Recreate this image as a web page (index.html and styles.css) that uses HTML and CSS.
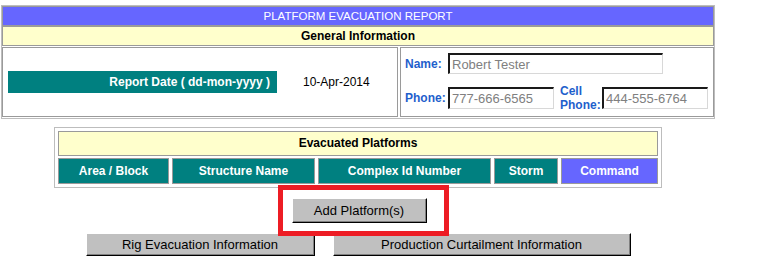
FILE: index.html
```html
<!DOCTYPE html>
<html lang="en">
<head>
    <meta charset="UTF-8">
    <title>Platform Evacuation Report</title>
    <link rel="stylesheet" href="styles.css">
</head>
<body>
    <div class="page">
        <div class="report">
            <div class="report-title">PLATFORM EVACUATION REPORT</div>
            <div class="section-title">General Information</div>
            <div class="info">
                <div class="info-date">
                    <div class="date-label">Report Date ( dd-mon-yyyy )</div>
                    <div class="date-value">10-Apr-2014</div>
                </div>
                <div class="info-contact">
                    <div class="contact-row">
                        <label class="field-label">Name:</label>
                        <input class="field field-name" type="text" value="Robert Tester" readonly>
                    </div>
                    <div class="contact-row">
                        <label class="field-label">Phone:</label>
                        <input class="field field-phone" type="text" value="777-666-6565" readonly>
                        <label class="field-label cell-label">Cell<br>Phone:</label>
                        <input class="field field-phone" type="text" value="444-555-6764" readonly>
                    </div>
                </div>
            </div>
        </div>

        <div class="platforms">
            <div class="section-title platforms-title">Evacuated Platforms</div>
            <div class="platforms-head">
                <div class="head-cell">Area / Block</div>
                <div class="head-cell">Structure Name</div>
                <div class="head-cell">Complex Id Number</div>
                <div class="head-cell">Storm</div>
                <div class="head-cell head-command">Command</div>
            </div>
        </div>

        <div class="actions">
            <button class="btn btn-add">Add Platform(s)</button>
        </div>
        <div class="actions actions-nav">
            <button class="btn btn-rig">Rig Evacuation Information</button>
            <button class="btn btn-prod">Production Curtailment Information</button>
        </div>

        <div class="highlight"></div>
    </div>
</body>
</html>
```

FILE: styles.css
```css
:root {
    --purple: #6666ff;
    --yellow: #ffffcc;
    --teal: #008080;
    --cell-border: #9a9a9a;
    --outer-border: #bdbdbd;
    --label-blue: #1f5fcc;
    --btn-grey: #c0c0c0;
}

* {
    box-sizing: border-box;
}

body {
    margin: 0;
    background: #fff;
    font-family: "Liberation Sans", Arial, sans-serif;
    font-size: 12px;
    color: #000;
}

.page {
    position: relative;
    width: 716px;
    padding-top: 5px;
}

/* report header block */
.report {
    margin-left: 1px;
    width: 714px;
    border: 1px solid var(--outer-border);
    padding-bottom: 1px;
}

.report-title {
    height: 20px;
    line-height: 18px;
    border: 1px solid var(--cell-border);
    background: var(--purple);
    color: #fff;
    text-align: center;
    font-size: 11.5px;
}

.section-title {
    height: 20px;
    line-height: 18px;
    border: 1px solid var(--cell-border);
    background: var(--yellow);
    text-align: center;
    font-weight: bold;
}

.info {
    display: flex;
    gap: 2px;
    margin-top: 1px;
    height: 70px;
}

.info-date {
    width: 396px;
    border: 1px solid var(--cell-border);
    display: flex;
    align-items: center;
    padding-left: 5px;
}

.date-label {
    width: 269px;
    height: 22px;
    line-height: 22px;
    background: var(--teal);
    color: #fff;
    font-weight: bold;
    text-align: right;
    padding-right: 7px;
}

.date-value {
    margin-left: 26px;
}

.info-contact {
    flex: 1;
    border: 1px solid var(--cell-border);
    padding: 5px 4px 0 4px;
    display: flex;
    flex-direction: column;
    gap: 10px;
}

.contact-row {
    display: flex;
    align-items: center;
}

.field-label {
    width: 43px;
    color: var(--label-blue);
    font-weight: bold;
    line-height: 14px;
}

.cell-label {
    width: 42px;
    margin-left: 6px;
}

.field {
    height: 21px;
    padding: 0 2px;
    border-style: solid;
    border-width: 2px 1px 1px 2px;
    border-color: #1a1a1a #d8d8d8 #d8d8d8 #1a1a1a;
    background: #fff;
    color: #808080;
    font-family: "Liberation Sans", Arial, sans-serif;
    font-size: 13px;
    outline: none;
}

.field-name {
    width: 215px;
}

.field-phone {
    width: 106px;
    height: 22px;
}

/* evacuated platforms table */
.platforms {
    width: 608px;
    margin: 8px auto 0;
    border: 1px solid var(--outer-border);
    padding: 3px;
}

.platforms-title {
    height: 25px;
    line-height: 23px;
}

.platforms-head {
    display: grid;
    grid-template-columns: 111px 143px 173px 64px 97px;
    gap: 3px;
    margin-top: 2px;
}

.head-cell {
    height: 26px;
    line-height: 24px;
    border: 1px solid var(--cell-border);
    background: var(--teal);
    color: #fff;
    font-weight: bold;
    text-align: center;
}

.head-command {
    background: var(--purple);
}

/* buttons */
.actions {
    display: flex;
    justify-content: center;
    gap: 18px;
    margin-top: 10px;
}

.btn {
    height: 25px;
    padding: 0;
    background: var(--btn-grey);
    border: 1px solid;
    border-color: #fff #000 #000 #fff;
    box-shadow: inset -1px -1px 0 #808080;
    font-family: "Liberation Sans", Arial, sans-serif;
    font-size: 13px;
    color: #000;
}

.btn-add {
    width: 135px;
    margin-left: 2px;
}

.actions-nav .btn {
    height: 23px;
}

.btn-rig {
    width: 229px;
}

.btn-prod {
    width: 298px;
}

/* red annotation box over the add button */
.highlight {
    position: absolute;
    left: 278px;
    top: 185px;
    width: 171px;
    height: 51px;
    border: 5px solid #ed1c24;
}
```
